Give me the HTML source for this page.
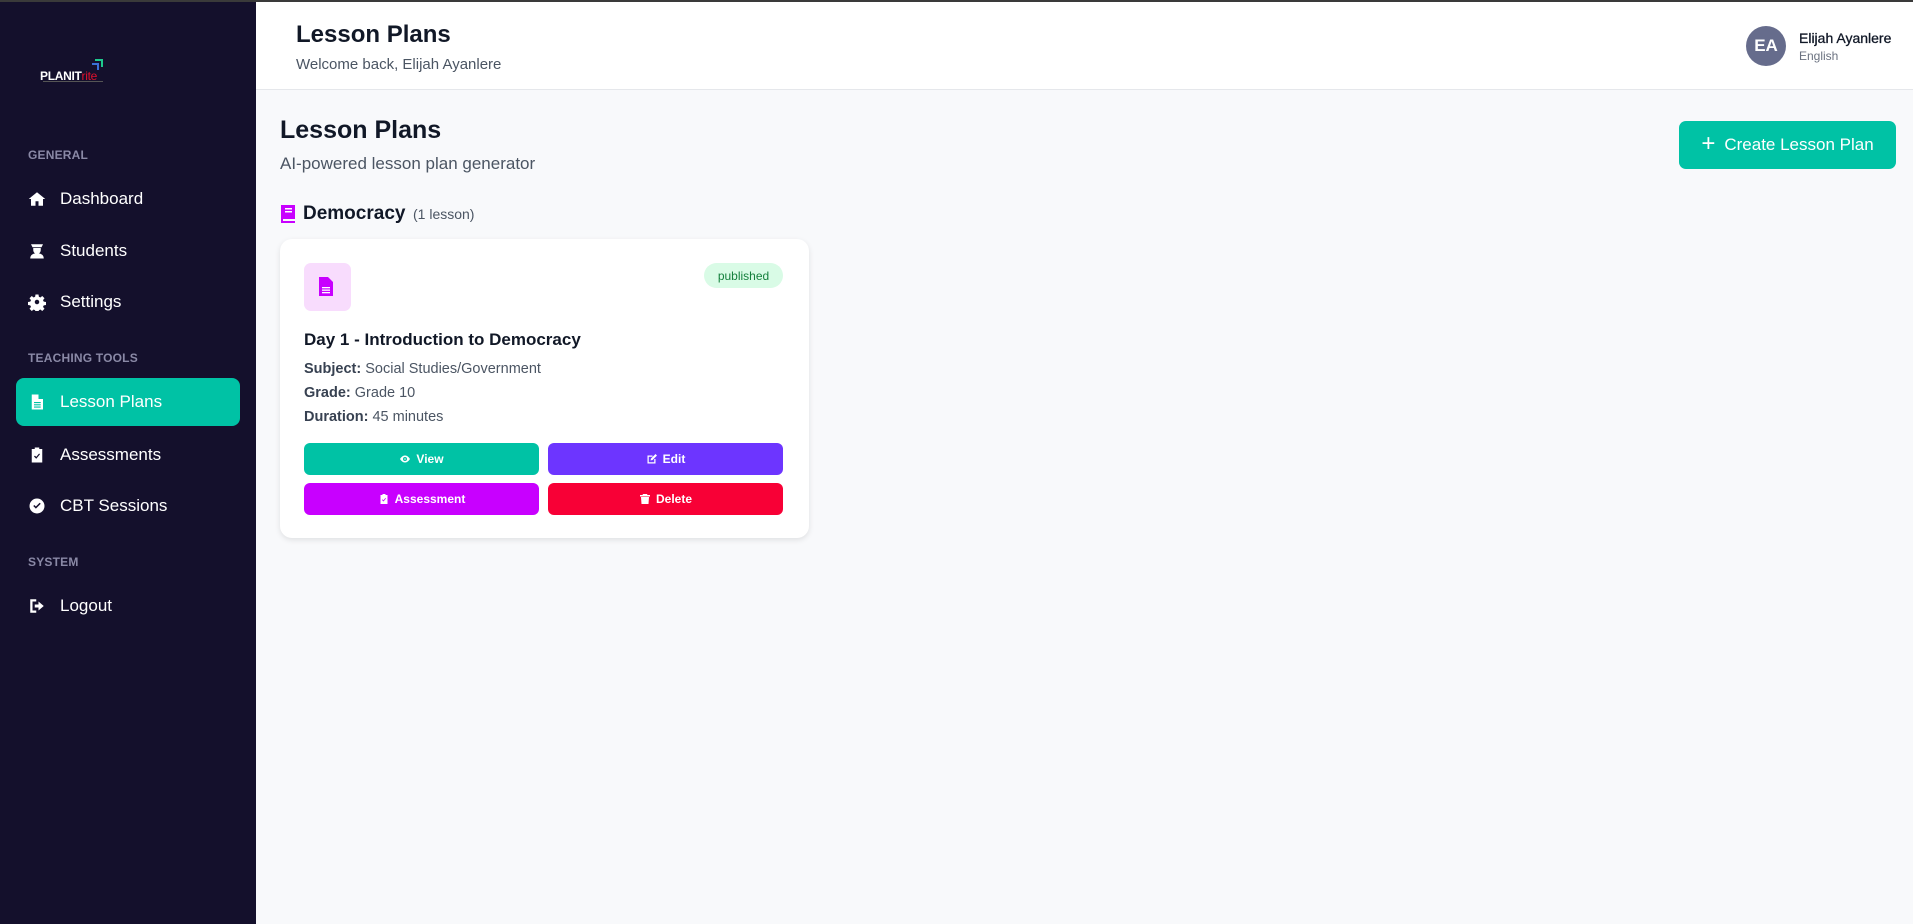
<!DOCTYPE html>
<html><head><style>
*{margin:0;padding:0;box-sizing:border-box}
body{width:1913px;height:924px;overflow:hidden;font-family:"Liberation Sans",sans-serif;background:#f8f9fb;position:relative}
.topline{position:absolute;left:0;top:0;width:1913px;height:2px;background:#3a3a3a;z-index:5}
.sb{position:absolute;left:0;top:0;width:256px;height:924px;background:#14102c}
.sec{position:absolute;left:28px;font-size:12px;font-weight:bold;color:#8a89a6;letter-spacing:.2px}
.it{position:absolute;left:16px;width:224px;height:48px;border-radius:8px;color:#fff;font-size:17px;display:flex;align-items:center}
.it svg{position:absolute;left:12px;width:18px;height:18px;fill:#fff}
.it span{position:absolute;left:44px}
.hdr{position:absolute;left:256px;top:2px;width:1657px;height:88px;background:#fff;border-bottom:1px solid #e5e7eb}
.btn{position:absolute;border-radius:6px;color:#fff;font-size:12px;font-weight:bold;display:flex;align-items:center;justify-content:center;gap:5px;height:32px;width:235px}
.btn svg{width:12px;height:12px;fill:#fff}
.lab{position:absolute;left:304px;font-size:15px;color:#4b5563}
.lab b{color:#374151}
</style></head><body>
<div class="topline"></div>
<div class="sb">
  <div style="position:absolute;left:40px;top:69px;font-size:12px;font-weight:bold;color:#fff;letter-spacing:-.3px">PLANIT<span style="color:#e0102d;font-weight:normal">rite</span></div>
  <div style="position:absolute;left:95px;top:59px;width:8px;height:8px;border-top:2px solid #1ec98e;border-right:2px solid #1ec98e"></div>
  <div style="position:absolute;left:92px;top:63px;width:7px;height:7px;border-top:2px solid #3a6fd8;border-right:2px solid #3a6fd8"></div>
  <div style="position:absolute;left:43px;top:81px;width:60px;height:1px;background:#555"></div>
  <div class="sec" style="top:148px">GENERAL</div>
  <div class="it" style="top:175px"><svg viewBox="0 0 24 24"><path d="M12 3L1 12h3v9h6v-6h4v6h6v-9h3z"/></svg><span>Dashboard</span></div>
  <div class="it" style="top:227px"><svg viewBox="0 0 24 24"><path d="M4 3h16l-2 4H6zM7 8h10v3a5 5 0 0 1-10 0zM3 22c0-5 4-7 9-7s9 2 9 7z"/></svg><span>Students</span></div>
  <div class="it" style="top:278px"><svg viewBox="0 0 24 24"><path d="M10 2h4l.5 3 2 1 2.5-2 3 3-2 2.5 1 2 3 .5v4l-3 .5-1 2 2 2.5-3 3-2.5-2-2 1-.5 3h-4l-.5-3-2-1-2.5 2-3-3 2-2.5-1-2-3-.5v-4l3-.5 1-2-2-2.5 3-3 2.5 2 2-1zM12 9a3 3 0 1 0 0 6 3 3 0 0 0 0-6z"/></svg><span>Settings</span></div>
  <div class="sec" style="top:351px">TEACHING TOOLS</div>
  <div class="it" style="top:378px;background:#00c2a5"><svg viewBox="0 0 24 24"><path d="M5 2h9l6 6v14H5zM14 2v6h6M8 12h9v1.5H8zM8 15h9v1.5H8zM8 18h9v1.5H8z" fill-rule="evenodd"/></svg><span>Lesson Plans</span></div>
  <div class="it" style="top:431px"><svg viewBox="0 0 24 24"><path d="M9 2h6v2h4v18H5V4h4zM8 14l3 3 5-6-1.2-1L11 14.5 9.2 12.8z" fill-rule="evenodd"/></svg><span>Assessments</span></div>
  <div class="it" style="top:482px"><svg viewBox="0 0 24 24"><path d="M12 2a10 10 0 1 0 0 20 10 10 0 0 0 0-20zM7 12l3.5 3.5L17 9l-1.5-1.4-5 5-2-2z" fill-rule="evenodd"/></svg><span>CBT Sessions</span></div>
  <div class="sec" style="top:555px">SYSTEM</div>
  <div class="it" style="top:582px"><svg viewBox="0 0 24 24"><path d="M3 3h8v3H6v12h5v3H3zM14 6l7 6-7 6v-4H9v-4h5z"/></svg><span>Logout</span></div>
</div>
<div class="hdr">
  <div style="position:absolute;left:40px;top:19px;font-size:24px;font-weight:bold;color:#111827">Lesson Plans</div>
  <div style="position:absolute;left:40px;top:54px;font-size:15px;color:#4b5563">Welcome back, Elijah Ayanlere</div>
  <div style="position:absolute;left:1490px;top:24px;width:40px;height:40px;border-radius:50%;background:#666c8c;color:#fff;font-size:17px;font-weight:bold;display:flex;align-items:center;justify-content:center">EA</div>
  <div style="position:absolute;left:1543px;top:28px;font-size:14px;color:#111827;-webkit-text-stroke:.3px #111827">Elijah Ayanlere</div>
  <div style="position:absolute;left:1543px;top:47px;font-size:12px;color:#6b7280">English</div>
</div>
<div style="position:absolute;left:280px;top:116px;font-size:25px;font-weight:bold;color:#111827">Lesson Plans</div>
<div style="position:absolute;left:280px;top:154px;font-size:17px;color:#4b5563">AI-powered lesson plan generator</div>
<div style="position:absolute;left:1679px;top:121px;width:217px;height:48px;border-radius:7px;background:#00c2a5;color:#fff;font-size:17px;display:flex;align-items:center;justify-content:center"><span style="font-size:24px;margin-right:9px;margin-top:-3px">+</span>Create Lesson Plan</div>
<svg style="position:absolute;left:280px;top:204px" width="16" height="19" viewBox="0 0 16 19"><path d="M1 1h14v14H3v2h12v2H1z" fill="#c800ff"/><rect x="5" y="4" width="7" height="1.5" fill="#fff"/><rect x="5" y="7" width="7" height="1.5" fill="#fff"/></svg>
<div style="position:absolute;left:303px;top:203px;font-size:19px;font-weight:bold;color:#111827">Democracy</div>
<div style="position:absolute;left:413px;top:206px;font-size:14px;color:#4b5563">(1 lesson)</div>
<div style="position:absolute;left:280px;top:239px;width:529px;height:299px;background:#fff;border-radius:12px;box-shadow:0 2px 6px rgba(0,0,0,.1)"></div>
<div style="position:absolute;left:304px;top:263px;width:47px;height:48px;border-radius:7px;background:#f8dcfd"></div>
<svg style="position:absolute;left:318px;top:276px" width="16" height="21" viewBox="0 0 16 21"><path d="M1 1h9l5 5v14H1z" fill="#c800ff"/><rect x="4" y="11" width="8" height="1.3" fill="#fff"/><rect x="4" y="13.5" width="8" height="1.3" fill="#fff"/><rect x="4" y="16" width="8" height="1.3" fill="#fff"/></svg>
<div style="position:absolute;left:704px;top:263px;width:79px;height:25px;border-radius:13px;background:#d9fbe6;color:#15803d;font-size:12px;display:flex;align-items:center;justify-content:center">published</div>
<div style="position:absolute;left:304px;top:330px;font-size:17px;font-weight:bold;color:#111827">Day 1 - Introduction to Democracy</div>
<div class="lab" style="top:361px;font-size:14.5px"><b>Subject:</b> Social Studies/Government</div>
<div class="lab" style="top:385px;font-size:14.5px"><b>Grade:</b> Grade 10</div>
<div class="lab" style="top:409px;font-size:14.5px"><b>Duration:</b> 45 minutes</div>
<div class="btn" style="left:304px;top:443px;background:#00c2a5"><svg viewBox="0 0 24 24"><path d="M12 5C6 5 2 12 2 12s4 7 10 7 10-7 10-7-4-7-10-7zm0 3a4 4 0 1 1 0 8 4 4 0 0 1 0-8zm0 2.5a1.5 1.5 0 1 0 0 3 1.5 1.5 0 0 0 0-3z" fill-rule="evenodd"/></svg>View</div>
<div class="btn" style="left:548px;top:443px;background:#6d35ff"><svg viewBox="0 0 24 24"><path d="M3 5h10v2.5H5.5v11h11V12H19v9H3zM19 2l3 3-9 9-4 1 1-4z"/></svg>Edit</div>
<div class="btn" style="left:304px;top:483px;background:#c800ff"><svg viewBox="0 0 24 24"><path d="M9 2h6v2h4v18H5V4h4zM8 14l3 3 5-6-1.2-1L11 14.5 9.2 12.8z" fill-rule="evenodd"/></svg>Assessment</div>
<div class="btn" style="left:548px;top:483px;background:#f80036"><svg viewBox="0 0 24 24"><path d="M8 2h8l1 2h5v3H2V4h5zM4 8h16l-1 14H5z"/></svg>Delete</div>
</body></html>
